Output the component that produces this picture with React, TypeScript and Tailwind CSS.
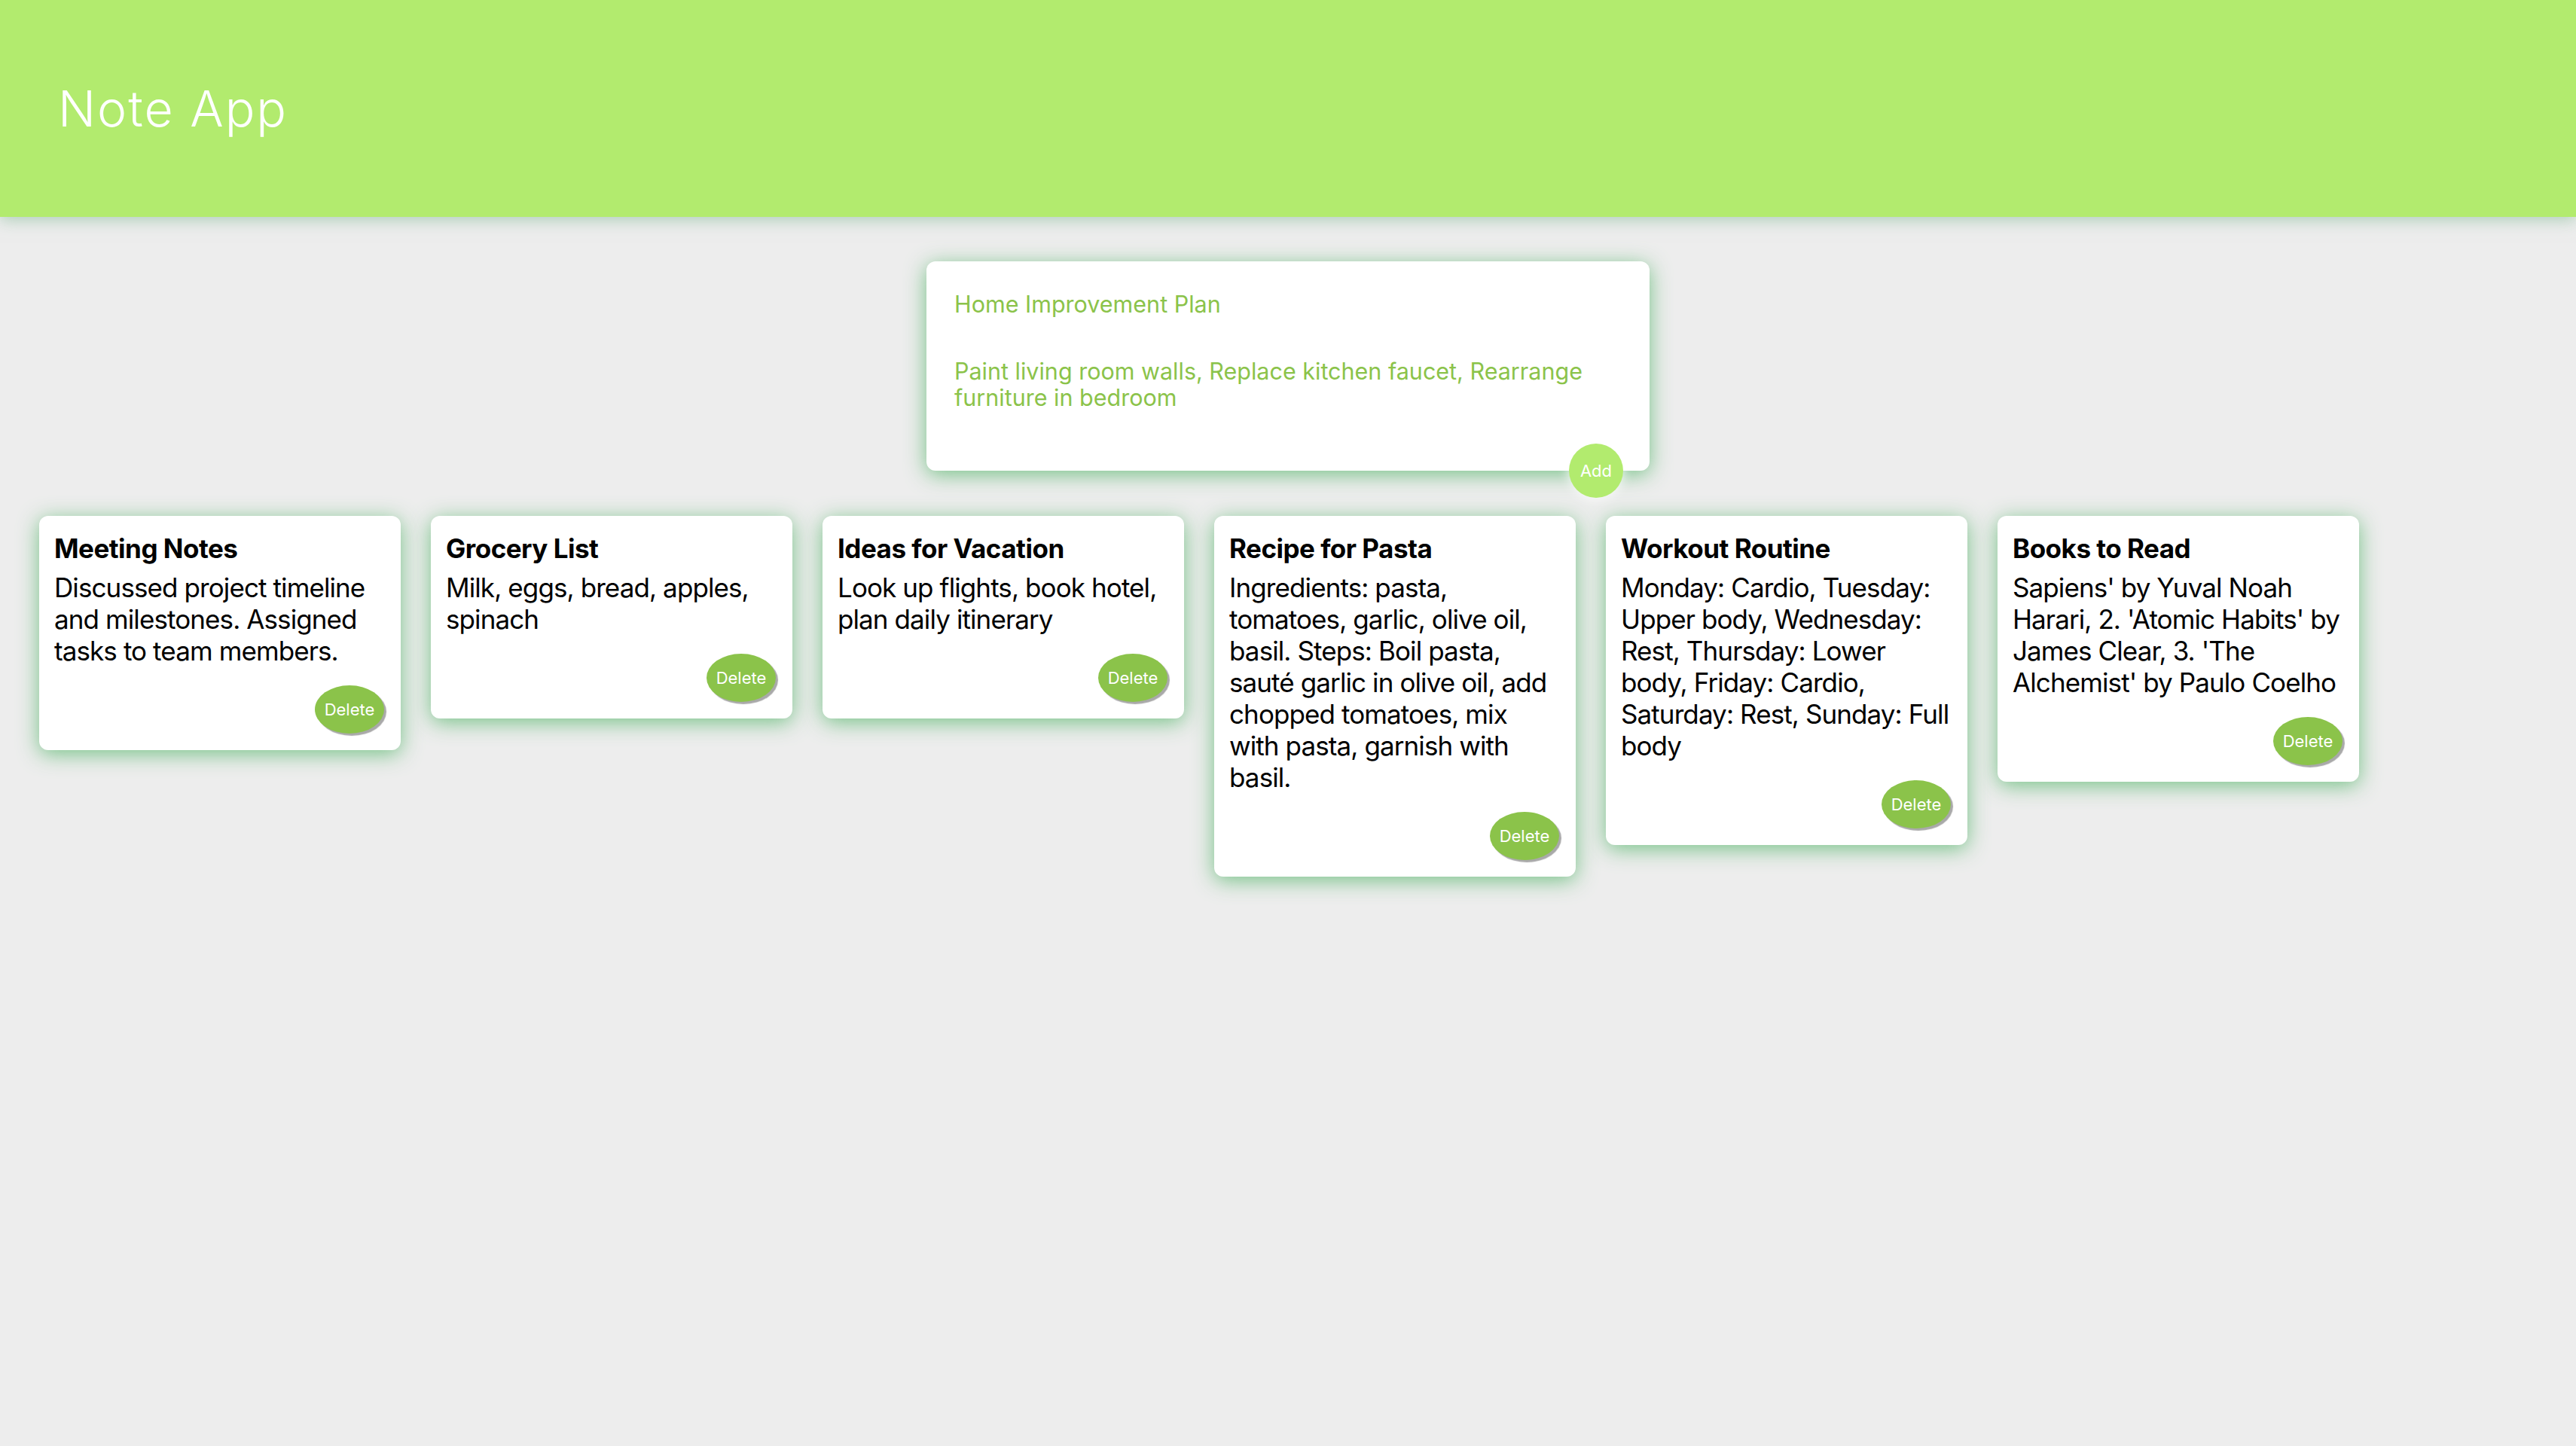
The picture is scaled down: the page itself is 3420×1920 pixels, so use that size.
import React from "react";

type Note = { title: string; body: string };

const notes: Note[] = [
  { title: "Meeting Notes", body: "Discussed project timeline and milestones. Assigned tasks to team members." },
  { title: "Grocery List", body: "Milk, eggs, bread, apples, spinach" },
  { title: "Ideas for Vacation", body: "Look up flights, book hotel, plan daily itinerary" },
  {
    title: "Recipe for Pasta",
    body: "Ingredients: pasta, tomatoes, garlic, olive oil, basil. Steps: Boil pasta, sauté garlic in olive oil, add chopped tomatoes, mix with pasta, garnish with basil.",
  },
  {
    title: "Workout Routine",
    body: "Monday: Cardio, Tuesday: Upper body, Wednesday: Rest, Thursday: Lower body, Friday: Cardio, Saturday: Rest, Sunday: Full body",
  },
  {
    title: "Books to Read",
    body: "Sapiens' by Yuval Noah Harari, 2. 'Atomic Habits' by James Clear, 3. 'The Alchemist' by Paulo Coelho",
  },
];

const NoteCard = ({ note }: { note: Note }) => (
  <div className="w-[480px] shrink-0 rounded-[12px] bg-white py-[22px] pr-[18px] pl-[20px] shadow-[0_5px_28px_rgba(96,186,116,0.85)]">
    <h3 className="text-[35px] font-bold leading-[42px] tracking-[-0.5px] text-black">{note.title}</h3>
    <p className="mt-[10px] text-[35px] leading-[42px] tracking-[-0.9px] text-black">{note.body}</p>
    <div className="mt-[25px] flex justify-end pr-[4px]">
      <button className="h-[64px] w-[92px] rounded-[50%] bg-[#8bc34a] text-[22px] text-white shadow-[3px_3px_1px_#a9a9a9]">
        Delete
      </button>
    </div>
  </div>
);

export default function App() {
  return (
    <div className="min-h-[1920px] bg-[#ededed] font-['Inter','Liberation_Sans',sans-serif]">
      <header className="flex h-[288px] items-center bg-[#b2eb6e] px-[77px] shadow-[0_4px_20px_rgba(120,180,140,0.55)]">
        <h1 className="text-[66px] font-light tracking-[2px] text-white">Note App</h1>
      </header>

      <div className="relative mx-auto mt-[59px] h-[278px] w-[960px] rounded-[12px] bg-white px-[37px] pt-[38px] shadow-[0_5px_28px_rgba(96,186,116,0.85)]">
        <input
          className="block h-[37px] w-full bg-transparent text-[30.5px] text-[#8bc34a] outline-none"
          defaultValue="Home Improvement Plan"
        />
        <textarea
          className="mt-[53px] block h-[105px] w-full resize-none bg-transparent text-[30.5px] leading-[35px] text-[#8bc34a] outline-none"
          defaultValue="Paint living room walls, Replace kitchen faucet, Rearrange furniture in bedroom"
        />
        <button className="absolute right-[35px] bottom-[-36px] h-[72px] w-[72px] rounded-full bg-[#b2eb6e] text-[22px] text-white shadow-[0_0_16px_rgba(255,255,255,0.9)]">
          Add
        </button>
      </div>

      <div className="mt-[60px] flex items-start gap-[40px] px-[52px]">
        {notes.map((note) => (
          <NoteCard key={note.title} note={note} />
        ))}
      </div>
    </div>
  );
}
